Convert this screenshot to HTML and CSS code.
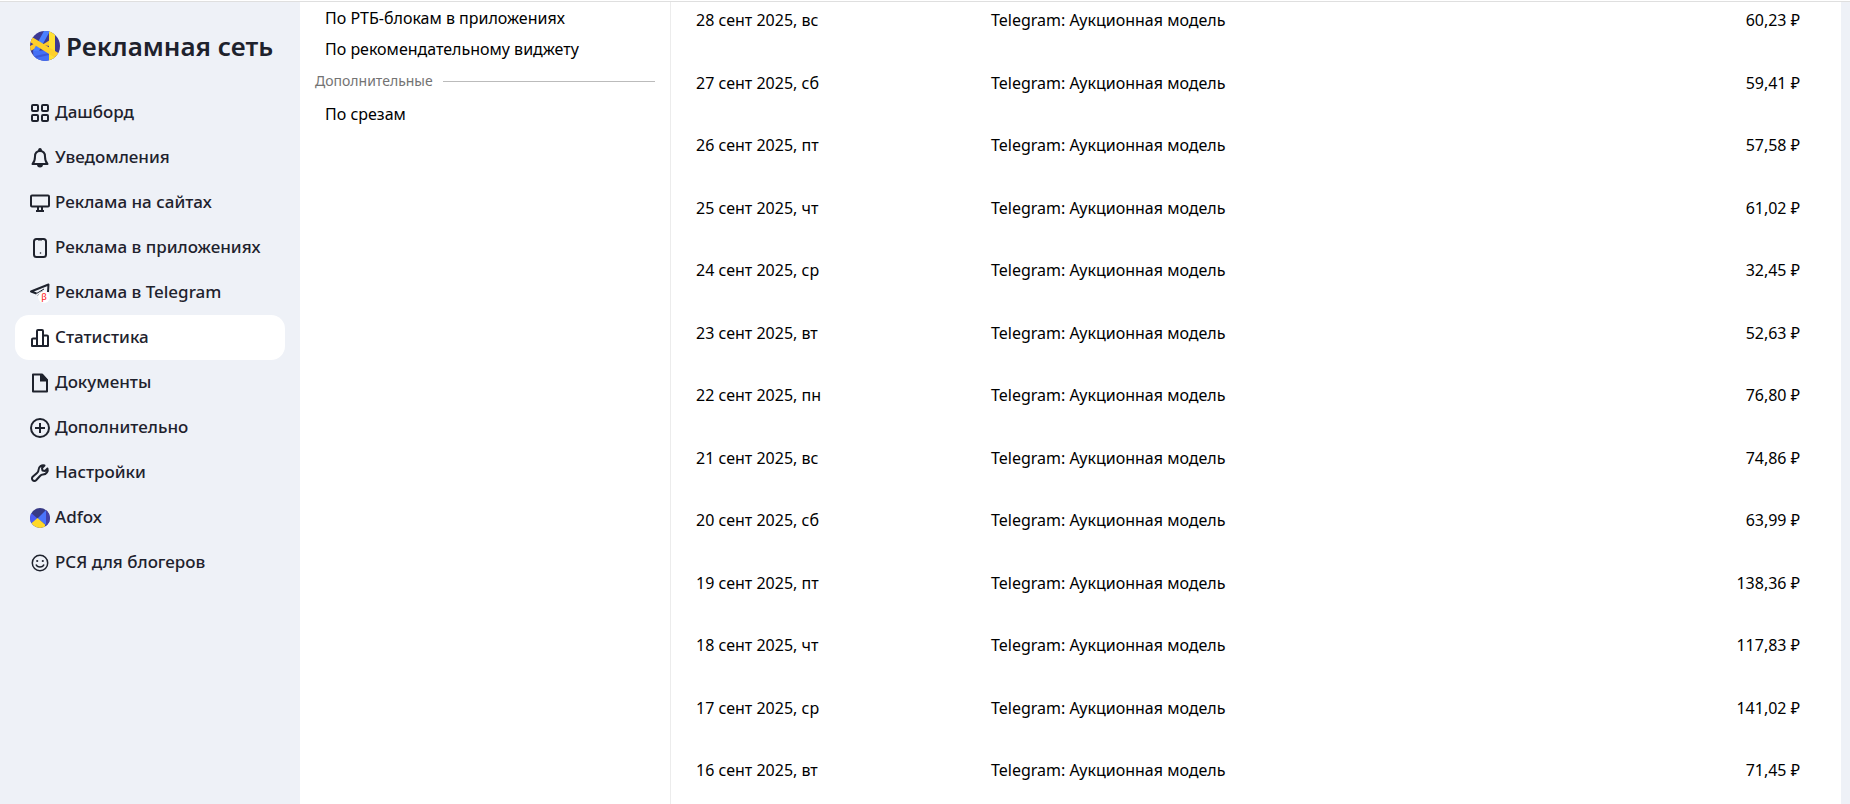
FILE: index.html
```html
<!DOCTYPE html>
<html lang="ru">
<head>
    <meta charset="UTF-8">
    <meta name="viewport" content="width=device-width, initial-scale=1.0">
    <title>Рекламная сеть</title>
    <link rel="stylesheet" href="styles.css">
</head>
<body>
    <div class="page">
        <aside class="sidebar">
            <a class="logo" href="#">
                <svg class="logo-icon" viewBox="0 0 30 30">
                    <clipPath id="logoClip"><circle cx="15" cy="15" r="15"/></clipPath>
                    <g clip-path="url(#logoClip)">
                        <rect width="30" height="30" fill="#3d3a94"/>
                        <path d="M0 15l9-5v6l-9 4z" fill="#ffc929"/>
                        <path d="M14 0h6L9 20H3z" fill="#4a80ff"/>
                        <path d="M3 20l16-1v11H4z" fill="#4470f5"/>
                        <path d="M5 25l14-3v2L6 27z" fill="#3b57d6"/>
                        <path d="M12 14l8-5v6z" fill="#ffc929"/>
                        <path d="M19 0h6v30h-6z" fill="#ffe033"/>
                        <path d="M2 6l28 17-3 5L0 11z" fill="#ffd02b"/>
                    </g>
                </svg>
                <span>Рекламная сеть</span>
            </a>
            <nav class="menu">
                <a class="menu-item" href="#">
                    <svg class="icon" viewBox="0 0 20 20"><rect x="2" y="2" width="6" height="6" rx="1"/><rect x="12" y="2" width="6" height="6" rx="1"/><rect x="2" y="12" width="6" height="6" rx="1"/><rect x="12" y="12" width="6" height="6" rx="1"/></svg>
                    <span>Дашборд</span>
                </a>
                <a class="menu-item" href="#">
                    <svg class="icon" viewBox="0 0 20 20"><path d="M2.500 16h15c-2-2-2.500-4-2.500-7.500C15 5 13 3 10 3S5 5 5 8.500c0 3.500-.5 5.500-2.500 7.500z"/><path class="fill" d="M8 3a2 3 0 0 1 4 0zM7 16.500h6a3 3 0 0 1-6 0z"/></svg>
                    <span>Уведомления</span>
                </a>
                <a class="menu-item" href="#">
                    <svg class="icon" viewBox="0 0 20 20"><rect x="1" y="2.500" width="18" height="11" rx="1"/><path d="M8 14v4M12 14v4M6 18h8"/></svg>
                    <span>Реклама на сайтах</span>
                </a>
                <a class="menu-item" href="#">
                    <svg class="icon" viewBox="0 0 20 20"><rect x="4" y="1" width="12" height="18" rx="2.500"/><path d="M8 1.500h4"/><circle class="fill" cx="10.500" cy="15" r="0.800"/></svg>
                    <span>Реклама в приложениях</span>
                </a>
                <a class="menu-item" href="#">
                    <span class="icon-wrap">
                        <svg class="icon" viewBox="0 0 20 20"><path d="M6.500 10.500L1 8.500 18.500 1.500 18 9"/><path class="thin" d="M6.500 10.500L14 6M8 12.500L12.500 8"/></svg>
                        <span class="beta">β</span>
                    </span>
                    <span>Реклама в Telegram</span>
                </a>
                <a class="menu-item active" href="#">
                    <svg class="icon" viewBox="0 0 20 20"><path d="M7 18H2v-6.500a1 1 0 0 1 1-1h4M7 18V3a1 1 0 0 1 1-1h4a1 1 0 0 1 1 1v15zM13 7.500h4a1 1 0 0 1 1 1V18h-5"/></svg>
                    <span>Статистика</span>
                </a>
                <a class="menu-item" href="#">
                    <svg class="icon" viewBox="0 0 20 20"><path d="M3 1.500h9l5 5.500v11.500H3z"/><path class="fill" d="M10 1h2.500L17.500 6.500V8.500H10z"/></svg>
                    <span>Документы</span>
                </a>
                <a class="menu-item" href="#">
                    <svg class="icon" viewBox="0 0 20 20"><circle cx="10" cy="10" r="9"/><path d="M10 5v10M5 10h10"/></svg>
                    <span>Дополнительно</span>
                </a>
                <a class="menu-item" href="#">
                    <svg class="icon" viewBox="0 0 20 20"><path d="M14.500 2.500C12 1.500 8.500 3.500 8.500 7c0 1.500-.3 2-1.500 3l-4.300 3.800a2.300 2.300 0 0 0 3.400 3.400L10 13c1-1.200 1.500-1.500 3-1.500 3.500 0 5.500-3.500 4.500-6L15 8l-2.500-.5L12 5z"/></svg>
                    <span>Настройки</span>
                </a>
                <a class="menu-item" href="#">
                    <svg class="icon-color" viewBox="0 0 20 20">
                        <clipPath id="adfoxClip"><circle cx="10" cy="10" r="10"/></clipPath>
                        <g clip-path="url(#adfoxClip)">
                            <rect width="20" height="20" fill="#373a86"/>
                            <path d="M0 4l7.500 6.500L0 17z" fill="#4b5cf5"/>
                            <path d="M16 2v15L7.500 10.500z" fill="#4a74fa"/>
                            <path d="M16 2h4v18h-6l2-3z" fill="#4340a8"/>
                            <path d="M7.500 10L15 16.500V20H0v-3.500z" fill="#ffd829"/>
                        </g>
                    </svg>
                    <span>Adfox</span>
                </a>
                <a class="menu-item" href="#">
                    <svg class="icon smile" viewBox="0 0 20 20"><circle cx="10" cy="10" r="7.700"/><path d="M6 11.500a4.200 3.500 0 0 0 8 0"/><circle class="fill" cx="7.200" cy="8" r="1.100"/><circle class="fill" cx="12.800" cy="8" r="1.100"/></svg>
                    <span>РСЯ для блогеров</span>
                </a>
            </nav>
        </aside>

        <main class="content">
            <div class="reports">
                <a class="report-link" href="#">По РТБ-блокам в приложениях</a>
                <a class="report-link" href="#">По рекомендательному виджету</a>
                <div class="group-title">Дополнительные</div>
                <a class="report-link" href="#">По срезам</a>
            </div>

            <table class="stats">
                <tbody>
                    <tr><td>28 сент 2025, вс</td><td>Telegram: Аукционная модель</td><td>60,23 ₽</td></tr>
                    <tr><td>27 сент 2025, сб</td><td>Telegram: Аукционная модель</td><td>59,41 ₽</td></tr>
                    <tr><td>26 сент 2025, пт</td><td>Telegram: Аукционная модель</td><td>57,58 ₽</td></tr>
                    <tr><td>25 сент 2025, чт</td><td>Telegram: Аукционная модель</td><td>61,02 ₽</td></tr>
                    <tr><td>24 сент 2025, ср</td><td>Telegram: Аукционная модель</td><td>32,45 ₽</td></tr>
                    <tr><td>23 сент 2025, вт</td><td>Telegram: Аукционная модель</td><td>52,63 ₽</td></tr>
                    <tr><td>22 сент 2025, пн</td><td>Telegram: Аукционная модель</td><td>76,80 ₽</td></tr>
                    <tr><td>21 сент 2025, вс</td><td>Telegram: Аукционная модель</td><td>74,86 ₽</td></tr>
                    <tr><td>20 сент 2025, сб</td><td>Telegram: Аукционная модель</td><td>63,99 ₽</td></tr>
                    <tr><td>19 сент 2025, пт</td><td>Telegram: Аукционная модель</td><td>138,36 ₽</td></tr>
                    <tr><td>18 сент 2025, чт</td><td>Telegram: Аукционная модель</td><td>117,83 ₽</td></tr>
                    <tr><td>17 сент 2025, ср</td><td>Telegram: Аукционная модель</td><td>141,02 ₽</td></tr>
                    <tr><td>16 сент 2025, вт</td><td>Telegram: Аукционная модель</td><td>71,45 ₽</td></tr>
                </tbody>
            </table>
        </main>
    </div>
</body>
</html>
```

FILE: styles.css
```css
* {
    box-sizing: border-box;
}

body {
    margin: 0;
    padding-top: 1px;
    font-family: 'Noto Sans', sans-serif;
    font-size: 16px;
    line-height: 20px;
    color: #000;
    background: #fff;
}

a {
    color: inherit;
    text-decoration: none;
}

.page {
    display: flex;
    height: calc(100vh - 1px);
    overflow: hidden;
    padding-right: 9px;
    border-top: 1px solid #dfdfdf;
    background: #eef1f7;
}

.sidebar {
    flex: none;
    width: 300px;
    padding: 24px 15px;
    color: #1e222d;
}

.logo {
    display: flex;
    align-items: center;
    gap: 6px;
    height: 40px;
    margin-bottom: 24px;
    padding-left: 15px;
    font-size: 26px;
    font-weight: 600;
    white-space: nowrap;
}

.logo-icon {
    flex: none;
    width: 30px;
    height: 30px;
}

.menu-item {
    display: flex;
    align-items: center;
    gap: 5px;
    height: 45px;
    padding: 0 15px;
    border-radius: 14px;
    font-size: 17px;
    font-weight: 500;
    white-space: nowrap;
}

.menu-item > span:last-child {
    padding-bottom: 2px;
}

.menu-item.active {
    background: #fff;
}

.icon,
.icon-color {
    flex: none;
    display: block;
    width: 20px;
    height: 20px;
}

.icon {
    fill: none;
    stroke: currentColor;
    stroke-width: 2;
    stroke-linejoin: round;
}

.icon .fill {
    fill: currentColor;
    stroke: none;
}

.icon .thin {
    stroke-width: 1;
}

.smile {
    stroke-width: 1.5;
}

.icon-wrap {
    position: relative;
}

.beta {
    position: absolute;
    right: 0;
    bottom: 0;
    width: 12px;
    height: 12px;
    border-radius: 50%;
    background: #fff;
    color: #f33;
    font-size: 9px;
    line-height: 12px;
    text-align: center;
}

.content {
    flex: 1;
    display: flex;
    background: #fff;
}

.reports {
    flex: none;
    width: 371px;
    padding: 0 15px;
    border-right: 1px solid #ececec;
}

.report-link {
    display: block;
    padding: 6px 10px 5px;
}

.group-title {
    display: flex;
    align-items: center;
    gap: 10px;
    height: 34px;
    color: #737373;
    font-size: 14px;
}

.group-title::after {
    content: '';
    flex: 1;
    height: 1px;
    background: #bbb;
}

.stats {
    flex: 1;
    align-self: flex-start;
    margin-top: -13px;
    border-collapse: collapse;
}

.stats tr {
    height: 62px;
}

.stats tr:nth-child(even) {
    height: 63px;
}

.stats td {
    padding: 0 25px;
    white-space: nowrap;
}

.stats td:first-child {
    width: 295px;
}

.stats td:last-child {
    padding-right: 41px;
    text-align: right;
}
```
